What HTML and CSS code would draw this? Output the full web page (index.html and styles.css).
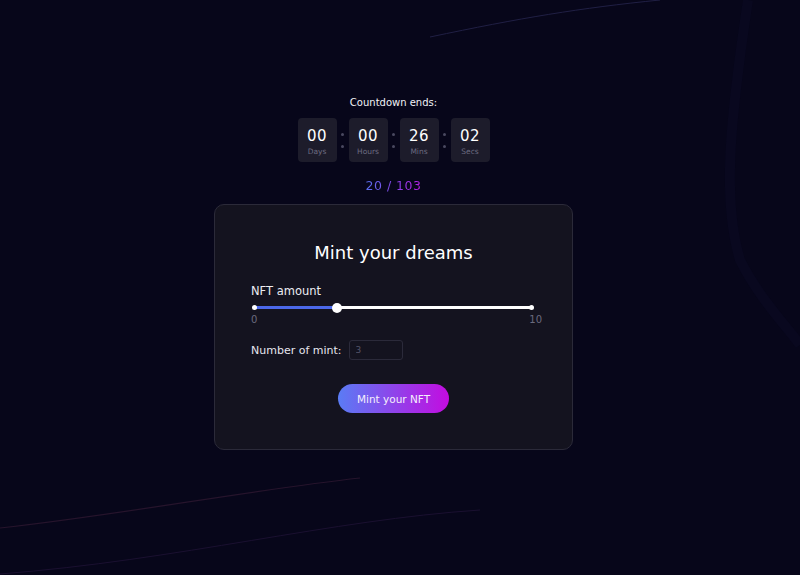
FILE: index.html
```html
<!DOCTYPE html>
<html lang="en">
<head>
<meta charset="utf-8">
<title>Mint your dreams</title>
<link rel="stylesheet" href="styles.css">
</head>
<body>
<svg class="bg-lines" width="800" height="575" viewBox="0 0 800 575" aria-hidden="true">
  <path d="M430 37 C 520 18, 580 8, 660 0" stroke="#201f44" stroke-width="1" fill="none"/>
  <path d="M0 528 C 120 515, 250 490, 360 478" stroke="#26142c" stroke-width="1.2" fill="none"/>
  <path d="M0 574 C 180 560, 330 520, 480 510" stroke="#1a1030" stroke-width="1" fill="none"/>
  <path d="M748 0 C 730 120, 722 200, 740 260 C 760 300, 790 330, 800 345" stroke="#09081f" stroke-width="10" fill="none"/>
</svg>
<main class="page">
  <p class="cd-title">Countdown ends:</p>
  <div class="countdown">
    <div class="cd-box"><span class="cd-num">00</span><span class="cd-label">Days</span></div>
    <div class="cd-sep"><i></i><i></i></div>
    <div class="cd-box"><span class="cd-num">00</span><span class="cd-label">Hours</span></div>
    <div class="cd-sep"><i></i><i></i></div>
    <div class="cd-box"><span class="cd-num">26</span><span class="cd-label">Mins</span></div>
    <div class="cd-sep"><i></i><i></i></div>
    <div class="cd-box"><span class="cd-num">02</span><span class="cd-label">Secs</span></div>
  </div>
  <p class="supply"><span>20 / 103</span></p>
  <section class="card">
    <h1 class="card-title">Mint your dreams</h1>
    <div class="field-label">NFT amount</div>
    <div class="slider">
      <div class="track">
        <span class="dot dot-start"></span>
        <span class="fill" style="width:30%"></span>
        <span class="thumb" style="left:30%"></span>
        <span class="dot dot-end"></span>
      </div>
      <div class="scale"><span>0</span><span>10</span></div>
    </div>
    <div class="mint-row">
      <label class="mint-label" for="num">Number of mint:</label>
      <input id="num" class="mint-input" type="text" value="3">
    </div>
    <div class="btn-row"><button class="btn">Mint your NFT</button></div>
  </section>
</main>
</body>
</html>
```
FILE: styles.css
```css
* { box-sizing: border-box; }
html, body { margin: 0; height: 100%; }
body {
  width: 800px;
  height: 575px;
  overflow: hidden;
  background: #07061a;
  color: #fff;
  font-family: "DejaVu Sans", "Open Sans", sans-serif;
  position: relative;
}
.bg-lines { position: absolute; left: 0; top: 0; z-index: 0; }
.page {
  position: relative;
  z-index: 1;
  width: 787px;
  display: flex;
  flex-direction: column;
  align-items: center;
  padding-top: 96px;
}
.cd-title {
  margin: 0;
  font-size: 10px;
  line-height: 13px;
  color: #f2f2f6;
}
.countdown {
  margin-top: 9px;
  display: flex;
  align-items: center;
}
.cd-box {
  width: 39px;
  height: 44px;
  background: #1d1c2b;
  border-radius: 4px;
  display: flex;
  flex-direction: column;
  align-items: center;
  padding-top: 9px;
}
.cd-num {
  font-size: 15px;
  line-height: 18px;
  color: #fff;
  letter-spacing: 0.5px;
}
.cd-label {
  margin-top: 2px;
  font-size: 7.5px;
  line-height: 10px;
  color: #6c6b80;
}
.cd-sep {
  width: 12px;
  display: flex;
  flex-direction: column;
  align-items: center;
  gap: 9px;
}
.cd-sep i {
  width: 3px;
  height: 3px;
  border-radius: 50%;
  background: #4a4960;
}
.supply {
  margin: 16px 0 0;
  font-size: 12.5px;
  line-height: 16px;
  letter-spacing: 0.5px;
}
.supply span {
  background: linear-gradient(90deg, #5a6ff0, #b21de0);
  -webkit-background-clip: text;
  background-clip: text;
  color: transparent;
}
.card {
  margin-top: 10px;
  width: 359px;
  height: 246px;
  background: #14131f;
  border: 1px solid #2b2a39;
  border-radius: 10px;
  padding: 36px 36px 0 36px;
  display: flex;
  flex-direction: column;
}
.card-title {
  margin: 0;
  text-align: center;
  font-weight: 400;
  font-size: 18px;
  line-height: 24px;
  color: #fff;
}
.field-label {
  margin-top: 19px;
  font-size: 11.5px;
  line-height: 14px;
  color: #ececf2;
}
.slider { margin-top: 8px; padding: 0 1px 0 3px; }
.track {
  position: relative;
  height: 3px;
  background: #fff;
  border-radius: 2px;
  margin-right: 3px;
}
.fill {
  position: absolute;
  left: 0; top: 0; bottom: 0;
  background: #4b68e8;
  border-radius: 2px;
}
.thumb {
  position: absolute;
  top: 50%;
  width: 10px;
  height: 10px;
  margin-left: -5px;
  margin-top: -5px;
  border-radius: 50%;
  background: #fff;
}
.dot {
  position: absolute;
  top: 50%;
  width: 5px; height: 5px;
  margin-top: -2.5px;
  border-radius: 50%;
  background: #fff;
}
.dot-start { left: -2px; z-index: 1; }
.dot-end { right: -2px; }
.scale {
  margin-top: 5px;
  display: flex;
  justify-content: space-between;
  font-size: 10px;
  line-height: 12px;
  color: #6b6a7e;
  margin-left: -3px;
  margin-right: -7px;
}
.mint-row {
  margin-top: 14px;
  display: flex;
  align-items: center;
  gap: 7px;
}
.mint-label {
  font-size: 11px;
  color: #e6e6ee;
}
.mint-input {
  width: 54px;
  height: 20px;
  background: transparent;
  border: 1px solid #2b2a3a;
  border-radius: 3px;
  color: #55546a;
  font-family: inherit;
  font-size: 9px;
  padding: 0 6px;
  outline: none;
}
.btn-row {
  margin-top: 24px;
  display: flex;
  justify-content: center;
}
.btn {
  width: 111px;
  height: 29px;
  border: 0;
  border-radius: 15px;
  background: linear-gradient(90deg, #5a7cf4, #c30ce0);
  color: #f4eefc;
  font-family: inherit;
  font-size: 10.5px;
  cursor: pointer;
}
```
